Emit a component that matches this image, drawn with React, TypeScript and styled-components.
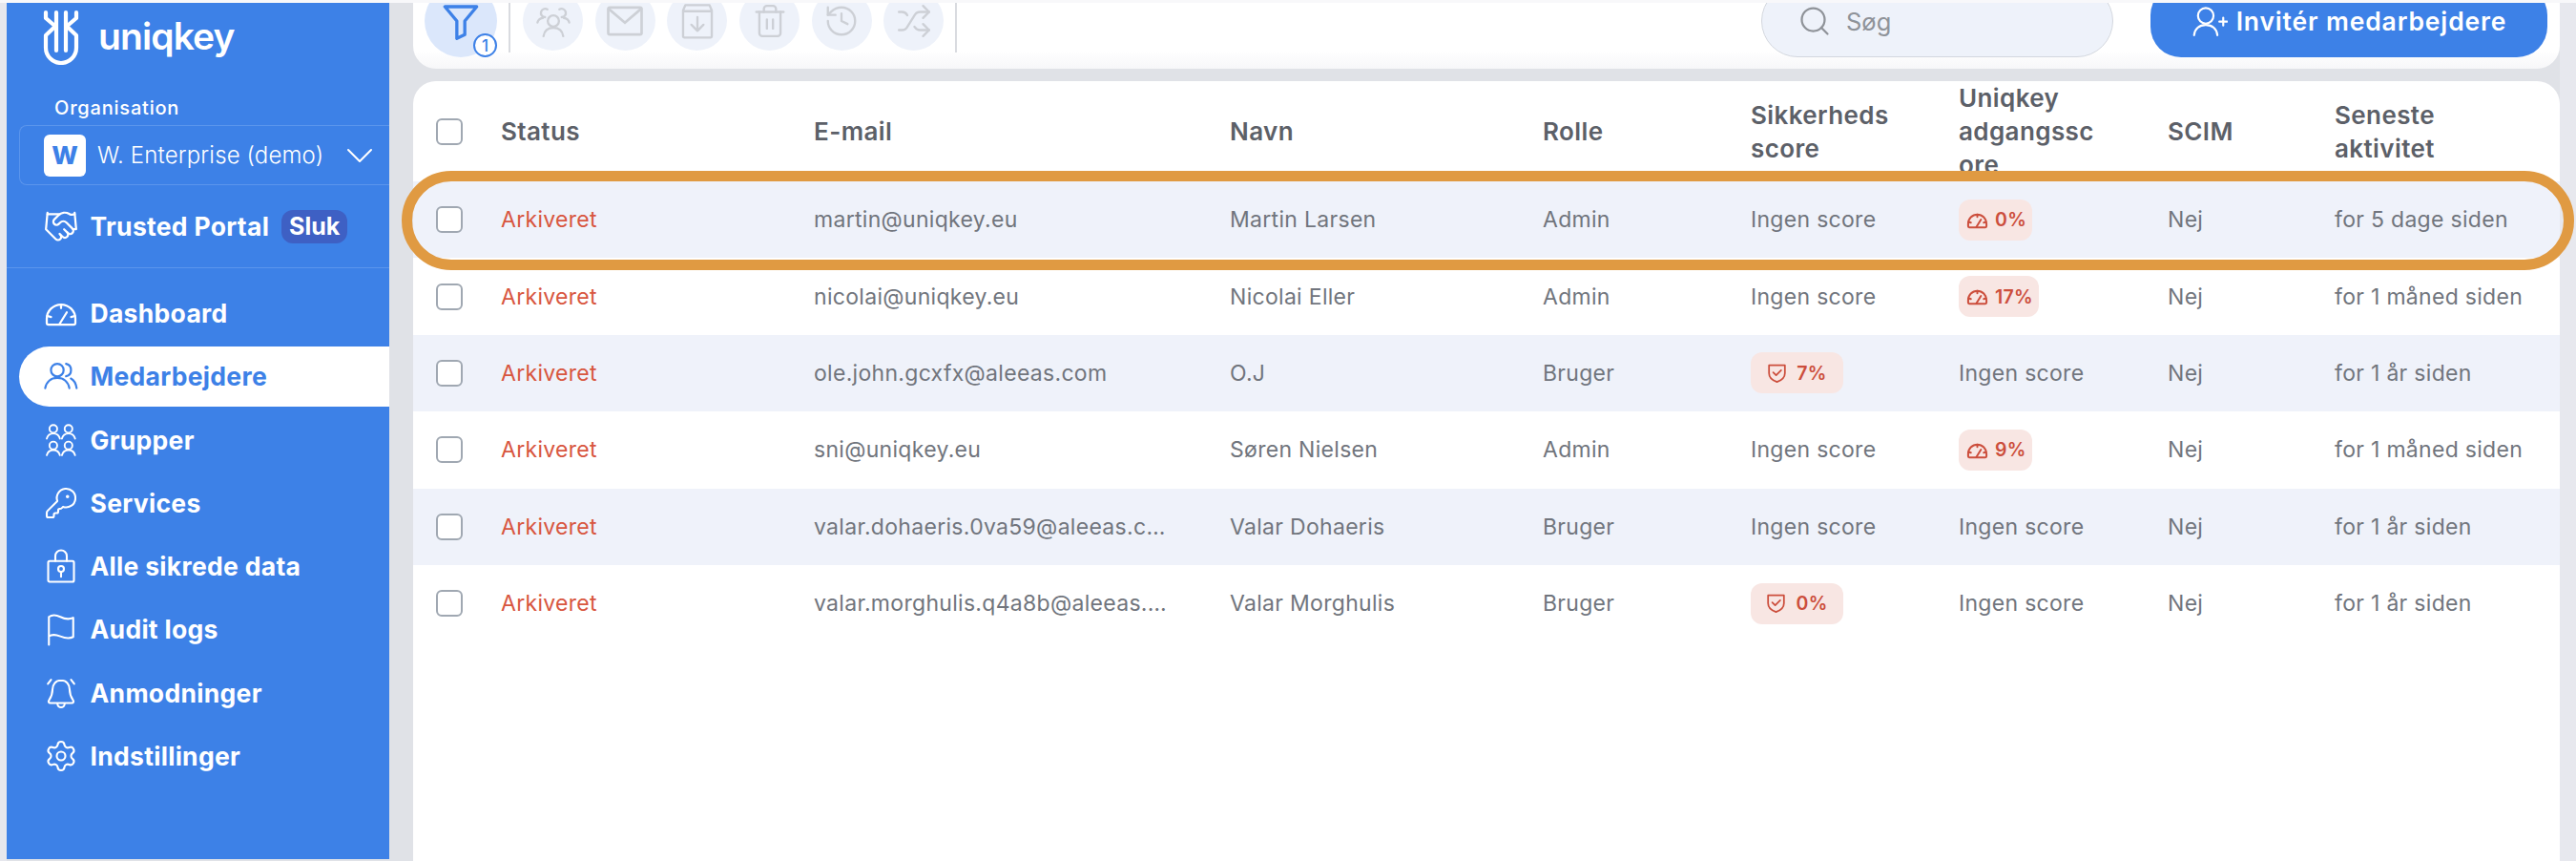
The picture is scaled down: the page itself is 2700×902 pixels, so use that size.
import React from "react";
import styled, { createGlobalStyle } from "styled-components";
import { KeyRound, Settings, Handshake, Trash2, History, Shuffle, Search } from "lucide-react";

const Global = createGlobalStyle`
  html, body { margin: 0; padding: 0; background: #e6e7ed; }
  body { font-family: "Inter", "Noto Sans", sans-serif; }
  * { box-sizing: border-box; }
`;

const BLUE = "#3d81e7";

const Page = styled.div`
  width: 2700px;
  height: 902px;
  overflow: hidden;
  display: flex;
  padding-left: 7px;
  border-top: 3px solid #f8f8fa;
  background: linear-gradient(90deg, #e6e7ed 0 7px, #e0e2e7 7px 2683px, #e7e8ee 2683px);
`;

const Sidebar = styled.aside`
  width: 401px;
  height: 897px;
  flex: none;
  display: flex;
  flex-direction: column;
  background: ${BLUE};
  color: #fff;
  padding: 7px 0 0 13px;
`;

const LogoRow = styled.div`
  display: flex;
  align-items: center;
  gap: 20px;
  padding-left: 25px;
  height: 58px;
`;

const LogoWord = styled.span`
  font-size: 39px;
  font-weight: 600;
  letter-spacing: -0.9px;
  line-height: 1;
  margin-top: -4px;
`;

const OrgLabel = styled.div`
  font-size: 20px;
  font-weight: 500;
  letter-spacing: 0.8px;
  line-height: 24px;
  margin: 33px 0 6px 37px;
`;

const OrgSelect = styled.div`
  height: 63px;
  display: flex;
  align-items: center;
  padding-left: 25px;
  border: 1.5px solid #5b95ec;
  border-right: 0;
  border-radius: 8px 0 0 8px;
`;

const OrgTile = styled.div`
  width: 44px;
  height: 44px;
  flex: none;
  border-radius: 6px;
  background: #fff;
  color: ${BLUE};
  font-size: 26px;
  font-weight: 800;
  display: flex;
  align-items: center;
  justify-content: center;
`;

const OrgName = styled.span`
  font-size: 24px;
  font-weight: 300;
  margin-left: 12px;
  white-space: nowrap;
  letter-spacing: 0.15px;
`;

const Chevron = styled.svg`
  margin-left: auto;
  margin-right: 17px;
  flex: none;
`;

const TrustedRow = styled.div`
  height: 87px;
  display: flex;
  align-items: center;
  border-bottom: 1.5px solid #5b95ec;
  margin-left: -13px;
  padding-left: 38px;
`;

const NavIcon = styled.span`
  width: 38px;
  height: 38px;
  flex: none;
  display: flex;
  align-items: center;
  justify-content: center;
`;

const NavLabel = styled.span`
  font-size: 26.5px;
  font-weight: 700;
  letter-spacing: 0.3px;
  margin-left: 11.500px;
  white-space: nowrap;
`;

const SlukChip = styled.span`
  margin-left: 13px;
  width: 69px;
  height: 35px;
  border-radius: 12px;
  background: #3e60c4;
  font-size: 25px;
  font-weight: 700;
  display: flex;
  align-items: center;
  justify-content: center;
`;

const Nav = styled.nav`
  display: flex;
  flex-direction: column;
  gap: 3.25px;
  margin-top: 15.5px;
`;

const NavItem = styled.div<{ $active?: boolean }>`
  height: 63px;
  display: flex;
  align-items: center;
  padding-left: 25px;
  border-radius: 32px 0 0 32px;
  background: ${(p) => (p.$active ? "#fff" : "transparent")};
  color: ${(p) => (p.$active ? BLUE : "#fff")};
`;

const Main = styled.main`
  position: relative;
  margin-left: 25px;
  width: 2250px;
  flex: none;
  display: flex;
  flex-direction: column;
  gap: 13px;
`;

const Toolbar = styled.div`
  height: 69px;
  flex: none;
  overflow: hidden;
  display: flex;
  align-items: flex-end;
  padding: 0 13px 12px 12px;
  border-radius: 0 0 24px 24px;
  background: linear-gradient(180deg, #fff 72%, #f7f7f9 100%);
`;

const FilterButton = styled.div`
  position: relative;
  width: 76px;
  height: 76px;
  flex: none;
  border-radius: 50%;
  background: #dbe7fb;
  color: ${BLUE};
  display: flex;
  align-items: center;
  justify-content: center;
`;

const FilterBadge = styled.span`
  position: absolute;
  right: 0;
  bottom: 0;
  width: 25px;
  height: 25px;
  border-radius: 50%;
  border: 2px solid ${BLUE};
  background: #fff;
  color: ${BLUE};
  font-size: 17px;
  font-weight: 500;
  display: flex;
  align-items: center;
  justify-content: center;
`;

const Separator = styled.span`
  width: 2px;
  height: 60px;
  flex: none;
  background: #d9dbe0;
  margin: 0 13px 5px 12px;
`;

const ActionGroup = styled.div`
  display: flex;
  gap: 12.7px;
  margin-bottom: 7px;
`;

const ActionCircle = styled.span`
  width: 63px;
  height: 63px;
  border-radius: 50%;
  background: #eef2fa;
  color: #cdd0d6;
  display: flex;
  align-items: center;
  justify-content: center;
`;

const SearchBox = styled.div`
  width: 369px;
  height: 76px;
  margin-left: auto;
  flex: none;
  border: 1.5px solid #d3d7de;
  border-radius: 38px;
  background: #eef2fa;
  color: #8f9399;
  display: flex;
  align-items: center;
  gap: 15px;
  padding-left: 37px;
  font-size: 25.5px;
  font-weight: 400;
`;

const InviteButton = styled.div`
  width: 416px;
  height: 76px;
  margin-left: 39px;
  flex: none;
  border-radius: 32px;
  background: ${BLUE};
  color: #fff;
  display: flex;
  align-items: center;
  justify-content: center;
  gap: 9px;
  font-size: 26.5px;
  font-weight: 600;
  letter-spacing: 0.85px;
`;

const TableCard = styled.section`
  flex: 1;
  background: #fff;
  border-radius: 24px 24px 0 0;
  overflow: hidden;
`;

const COLS = "92px 328px 436px 328px 218px 218px 219px 175px 236px";

const HeadRow = styled.div`
  display: grid;
  grid-template-columns: ${COLS};
  height: 105px;
  align-items: center;
  color: #5c6068;
  font-size: 26px;
  font-weight: 600;
  letter-spacing: 0.4px;
  line-height: 35px;
`;

const HeadCell = styled.div<{ $narrow?: boolean }>`
  max-width: ${(p) => (p.$narrow ? "152px" : "190px")};
  overflow-wrap: anywhere;
`;

const Row = styled.div<{ $striped: boolean }>`
  display: grid;
  grid-template-columns: ${COLS};
  height: 80.4px;
  align-items: center;
  background: ${(p) => (p.$striped ? "#eff2fa" : "#fff")};
  color: #71757d;
  font-size: 23px;
  font-weight: 400;
  letter-spacing: 0.3px;
`;

const CheckCell = styled.div`
  padding-left: 24px;
  display: flex;
  align-items: center;
`;

const Checkbox = styled.span`
  width: 28px;
  height: 28px;
  border: 2px solid #a0a8b2;
  border-radius: 6px;
  background: #fff;
`;

const StatusCell = styled.span`
  color: #d8563f;
`;

const EmailCell = styled.span`
  display: block;
  max-width: 382px;
  overflow: hidden;
  text-overflow: ellipsis;
  white-space: nowrap;
`;

const ScoreChip = styled.span<{ $shield?: boolean }>`
  height: 43px;
  display: inline-flex;
  align-items: center;
  justify-content: center;
  gap: ${(p) => (p.$shield ? "10px" : "7px")};
  width: ${(p) => (p.$shield ? "97px" : "auto")};
  padding: ${(p) => (p.$shield ? "0" : "0 6px 0 8px")};
  border-radius: 12px;
  background: #f8e6e3;
  color: #cc4e3c;
  font-size: 19.5px;
  font-weight: 600;
`;

const Highlight = styled.div`
  position: absolute;
  left: -12px;
  top: 176px;
  width: 2277px;
  height: 104px;
  border: 11px solid #e09a42;
  border-radius: 52px;
  pointer-events: none;
`;

const line = { fill: "none", stroke: "currentColor", strokeLinecap: "round", strokeLinejoin: "round" } as const;

const Logo = () => (
  <svg width="38" height="58" viewBox="0 0 38 58" fill="none" stroke="#fff" strokeWidth="4.2" strokeLinecap="round" strokeLinejoin="round">
    <path d="M3 3v6l10 8.5L3 27v13a16 16 0 0 0 32 0V27L25 17.5 35 9V3" />
    <path d="M14 3v40M24 3v40" />
  </svg>
);

const Gauge = ({ size = 36, sw = 1.5 }: { size?: number; sw?: number }) => (
  <svg width={size} height={size} viewBox="0 0 24 24" {...line} strokeWidth={sw}>
    <path d="M3.2 20h17.6a1.2 1.2 0 0 0 1.2-1.2V16A10 10 0 0 0 2 16v2.8A1.2 1.2 0 0 0 3.2 20Z" />
    <path d="M12 6v2.5M2.4 14l2.6.8M21.6 14l-2.6.8M11 19.5l5-8" />
  </svg>
);

const Users = () => (
  <svg width="38" height="38" viewBox="0 0 24 24" {...line} strokeWidth="1.4">
    <circle cx="9.500" cy="8" r="4.200" />
    <path d="M1.500 20c.8-4.200 3.800-6.800 8-6.800s7.200 2.600 8 6.800" />
    <path d="M15.300 3.900a4.200 4.200 0 0 1 0 8.200M18.500 13.600c2 1 3.300 3.200 3.800 6.400" />
  </svg>
);

const MiniPerson = ({ x, y }: { x: number; y: number }) => (
  <g transform={`translate(${x} ${y})`}>
    <circle cx="5" cy="3.6" r="2.7" />
    <path d="M.4 10.4C1 8 2.6 6.8 5 6.8s4 1.2 4.6 3.6" />
  </g>
);

const Groups = () => (
  <svg width="36" height="36" viewBox="0 0 24 24" {...line} strokeWidth="1.25">
    <MiniPerson x={1.6} y={0.6} />
    <MiniPerson x={12.2} y={0.6} />
    <MiniPerson x={1.6} y={12.2} />
    <MiniPerson x={12.2} y={12.2} />
  </svg>
);

const Vault = () => (
  <svg width="36" height="36" viewBox="0 0 24 24" {...line} strokeWidth="1.4">
    <path d="M4 8.5h16a1 1 0 0 1 1 1V22a1 1 0 0 1-1 1H4a1 1 0 0 1-1-1V9.500a1 1 0 0 1 1-1Z" />
    <path d="M8 8.500V5a4 4 0 0 1 8 0v3.500" />
    <circle cx="12" cy="14" r="2" />
    <path d="M12 16v3.500" />
  </svg>
);

const FlagIcon = () => (
  <svg width="36" height="36" viewBox="0 0 24 24" {...line} strokeWidth="1.4">
    <path d="M3.500 23V3.500c2-1.500 5-1.500 8 0s6 2 9 .6v13.400c-3 1.500-6 .8-9-.4s-6-1.500-8 0" />
  </svg>
);

const BellAlarm = () => (
  <svg width="36" height="36" viewBox="0 0 24 24" {...line} strokeWidth="1.4">
    <path d="M12 3.200c-3.800 0-6 2.800-6 6.500 0 4-1.500 6-2.500 7.500-.6.900 0 1.800 1 1.800h15c1 0 1.600-.9 1-1.800-1-1.500-2.500-3.500-2.500-7.500 0-3.700-2.200-6.500-6-6.500Z" />
    <path d="M9.500 19.500a2.500 2.500 0 0 0 5 0M2.800 5.600 5 2.800M21.200 5.600 19 2.800" />
  </svg>
);

const Funnel = () => (
  <svg width="40" height="40" viewBox="0 0 24 24" {...line} strokeWidth="2">
    <path d="M2 3h20l-7.500 9v8.500L9.500 23V12L2 3Z" />
  </svg>
);

const TeamIcon = () => (
  <svg width="38" height="38" viewBox="0 0 24 24" {...line} strokeWidth="1.5">
    <circle cx="12" cy="12" r="3.700" />
    <path d="M5.500 22c.5-3.500 3-5.500 6.500-5.500s6 2 6.500 5.500" />
    <path d="M6.500 9.500a2.800 2.800 0 1 1 1.500-5.200M17.500 9.500a2.800 2.800 0 1 0-1.500-5.200" />
    <path d="M1.500 13c.4-1.800 1.600-2.800 3.500-3M22.500 13c-.4-1.800-1.600-2.800-3.500-3" />
  </svg>
);

const MailIcon = () => (
  <svg width="40" height="40" viewBox="0 0 24 24" {...line} strokeWidth="1.6" strokeLinecap="square" strokeLinejoin="miter">
    <rect x="1.500" y="3.500" width="21" height="17" rx="1" />
    <path d="m2 4.500 10 8.500 10-8.500" />
  </svg>
);

const ArchiveIcon = () => (
  <svg width="38" height="38" viewBox="0 0 24 24" {...line} strokeWidth="1.5">
    <path d="M4 1.500h16l1.500 3.500V22a1 1 0 0 1-1 1H3.500a1 1 0 0 1-1-1V5L4 1.500ZM2.500 5.500h19" />
    <path d="M12 9.500v9M8 14.500l4 4 4-4" />
  </svg>
);

const ShieldIcon = () => (
  <svg width="21" height="22" viewBox="0 0 24 24" {...line} strokeWidth="2">
    <path d="M2.500 2.500h19V12c0 5-4 8.500-9.500 10.500C6.500 20.500 2.500 17 2.500 12V2.500Z" />
    <path d="m7.500 11 3.500 3.500 6-6" />
  </svg>
);

const PersonPlus = () => (
  <svg width="38" height="34" viewBox="0 0 28 24" {...line} strokeWidth="1.6">
    <circle cx="11" cy="8" r="6" />
    <path d="M2 23c.4-5 4-8 9-8s8.600 3 9 8" />
    <path d="M24.500 9.500v6M21.500 12.500h6" />
  </svg>
);

type Score = { kind: "gauge" | "shield"; value: string } | null;

const rows: { email: string; name: string; role: string; sec: Score; acc: Score; active: string }[] = [
  { email: "martin@uniqkey.eu", name: "Martin Larsen", role: "Admin", sec: null, acc: { kind: "gauge", value: "0%" }, active: "for 5 dage siden" },
  { email: "nicolai@uniqkey.eu", name: "Nicolai Eller", role: "Admin", sec: null, acc: { kind: "gauge", value: "17%" }, active: "for 1 måned siden" },
  { email: "ole.john.gcxfx@aleeas.com", name: "O.J", role: "Bruger", sec: { kind: "shield", value: "7%" }, acc: null, active: "for 1 år siden" },
  { email: "sni@uniqkey.eu", name: "Søren Nielsen", role: "Admin", sec: null, acc: { kind: "gauge", value: "9%" }, active: "for 1 måned siden" },
  { email: "valar.dohaeris.0va59@aleeas.com", name: "Valar Dohaeris", role: "Bruger", sec: null, acc: null, active: "for 1 år siden" },
  { email: "valar.morghulis.q4a8b@aleeas.com", name: "Valar Morghulis", role: "Bruger", sec: { kind: "shield", value: "0%" }, acc: null, active: "for 1 år siden" },
];

const ScoreValue = ({ score }: { score: Score }) =>
  score === null ? (
    <span>Ingen score</span>
  ) : score.kind === "gauge" ? (
    <div>
      <ScoreChip>
        <Gauge size={23} sw={2.1} />
        {score.value}
      </ScoreChip>
    </div>
  ) : (
    <div>
      <ScoreChip $shield>
        <ShieldIcon />
        {score.value}
      </ScoreChip>
    </div>
  );

const navItems: { label: string; icon: React.ReactNode; active?: boolean }[] = [
  { label: "Dashboard", icon: <Gauge /> },
  { label: "Medarbejdere", icon: <Users />, active: true },
  { label: "Grupper", icon: <Groups /> },
  { label: "Services", icon: <KeyRound size={36} strokeWidth={1.4} /> },
  { label: "Alle sikrede data", icon: <Vault /> },
  { label: "Audit logs", icon: <FlagIcon /> },
  { label: "Anmodninger", icon: <BellAlarm /> },
  { label: "Indstillinger", icon: <Settings size={36} strokeWidth={1.4} /> },
];

export default function App() {
  return (
    <Page>
      <Global />
      <Sidebar>
        <LogoRow>
          <Logo />
          <LogoWord>uniqkey</LogoWord>
        </LogoRow>
        <OrgLabel>Organisation</OrgLabel>
        <OrgSelect>
          <OrgTile>W</OrgTile>
          <OrgName>W. Enterprise (demo)</OrgName>
          <Chevron width="28" height="16" viewBox="0 0 28 16" {...line} strokeWidth="2">
            <path d="M2 2l12 12L26 2" />
          </Chevron>
        </OrgSelect>
        <TrustedRow>
          <NavIcon>
            <Handshake size={38} strokeWidth={1.4} />
          </NavIcon>
          <NavLabel>Trusted Portal</NavLabel>
          <SlukChip>Sluk</SlukChip>
        </TrustedRow>
        <Nav>
          {navItems.map((item) => (
            <NavItem key={item.label} $active={item.active}>
              <NavIcon>{item.icon}</NavIcon>
              <NavLabel>{item.label}</NavLabel>
            </NavItem>
          ))}
        </Nav>
      </Sidebar>
      <Main>
        <Toolbar>
          <FilterButton>
            <Funnel />
            <FilterBadge>1</FilterBadge>
          </FilterButton>
          <Separator />
          <ActionGroup>
            <ActionCircle><TeamIcon /></ActionCircle>
            <ActionCircle><MailIcon /></ActionCircle>
            <ActionCircle><ArchiveIcon /></ActionCircle>
            <ActionCircle><Trash2 size={38} strokeWidth={1.5} /></ActionCircle>
            <ActionCircle><History size={38} strokeWidth={1.5} /></ActionCircle>
            <ActionCircle><Shuffle size={38} strokeWidth={1.5} /></ActionCircle>
          </ActionGroup>
          <Separator />
          <SearchBox>
            <Search size={36} strokeWidth={1.5} />
            Søg
          </SearchBox>
          <InviteButton>
            <PersonPlus />
            Invitér medarbejdere
          </InviteButton>
        </Toolbar>
        <TableCard>
          <HeadRow>
            <CheckCell><Checkbox /></CheckCell>
            <HeadCell>Status</HeadCell>
            <HeadCell>E-mail</HeadCell>
            <HeadCell>Navn</HeadCell>
            <HeadCell>Rolle</HeadCell>
            <HeadCell $narrow>Sikkerheds score</HeadCell>
            <HeadCell $narrow>Uniqkey adgangsscore</HeadCell>
            <HeadCell>SCIM</HeadCell>
            <HeadCell $narrow>Seneste aktivitet</HeadCell>
          </HeadRow>
          {rows.map((r, i) => (
            <Row key={r.email} $striped={i % 2 === 0}>
              <CheckCell><Checkbox /></CheckCell>
              <StatusCell>Arkiveret</StatusCell>
              <EmailCell>{r.email}</EmailCell>
              <span>{r.name}</span>
              <span>{r.role}</span>
              <ScoreValue score={r.sec} />
              <ScoreValue score={r.acc} />
              <span>Nej</span>
              <span>{r.active}</span>
            </Row>
          ))}
        </TableCard>
        <Highlight />
      </Main>
    </Page>
  );
}
